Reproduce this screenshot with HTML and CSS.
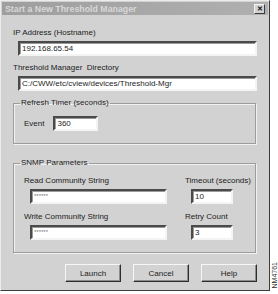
FILE: index.html
```html
<!DOCTYPE html>
<html lang="en">
<head>
    <meta charset="UTF-8">
    <title>Start a New Threshold Manager</title>
    <link rel="stylesheet" href="styles.css">
</head>
<body>
<div class="page">
    <div class="dialog">
        <div class="titlebar">
            <span class="title">Start a New Threshold Manager</span>
            <span class="close">&#x2715;</span>
        </div>
        <div class="content">
            <div class="field first">
                <div class="label">IP Address (Hostname)</div>
                <div class="input">192.168.65.54</div>
            </div>
            <div class="field">
                <div class="label">Threshold Manager&nbsp; Directory</div>
                <div class="input">C:/CWW/etc/cview/devices/Threshold-Mgr</div>
            </div>

            <fieldset class="group refresh">
                <legend>Refresh Timer (seconds)</legend>
                <div class="event-row">
                    <span class="label">Event</span>
                    <div class="input event">360</div>
                </div>
            </fieldset>

            <fieldset class="group snmp">
                <legend>SNMP Parameters</legend>
                <div class="snmp-grid">
                    <div class="cell">
                        <div class="label">Read Community String</div>
                        <div class="input secret">******</div>
                    </div>
                    <div class="cell">
                        <div class="label">Timeout (seconds)</div>
                        <div class="input num">10</div>
                    </div>
                    <div class="cell">
                        <div class="label">Write Community String</div>
                        <div class="input secret">******</div>
                    </div>
                    <div class="cell">
                        <div class="label">Retry Count</div>
                        <div class="input num">3</div>
                    </div>
                </div>
            </fieldset>

            <div class="buttons">
                <button>Launch</button>
                <button>Cancel</button>
                <button>Help</button>
            </div>
        </div>
    </div>
    <div class="side"><span>NM4761</span></div>
</div>
</body>
</html>
```

FILE: styles.css
```css
body {
    margin: 0;
    background-color: #fff;
    font-family: "Liberation Sans", Arial, sans-serif;
    font-size: 8px;
    color: #1c1c1c;
}
.page {
    display: flex;
    align-items: flex-start;
}
.dialog {
    width: 270px;
    height: 291px;
    box-sizing: border-box;
    background-color: #d2d2d2;
    border: 1px solid;
    border-color: #ececec #3c3c3c #3c3c3c #ececec;
    padding: 1px;
}
.titlebar {
    height: 13px;
    display: flex;
    justify-content: space-between;
    align-items: center;
    padding: 0 3px 0 3px;
    background: linear-gradient(to right, #9e9e9e, #b0b0b0);
}
.title {
    color: #d8d8d8;
    font-weight: bold;
    font-size: 8.8px;
}
.close {
    width: 9px;
    height: 8px;
    line-height: 8px;
    text-align: center;
    font-size: 7px;
    font-weight: bold;
    color: #111;
    background-color: #d2d2d2;
    border: 1px solid;
    border-color: #f4f4f4 #3c3c3c #3c3c3c #f4f4f4;
}
.content {
    padding: 0 11px 0 11px;
}
.label {
    line-height: 10px;
    white-space: nowrap;
}
.input {
    height: 11px;
    line-height: 11px;
    padding-left: 2px;
    background-color: #fff;
    border: 2px solid;
    border-color: #4a4a4a #f4f4f4 #f4f4f4 #4a4a4a;
    box-shadow: inset 1px 1px 0 #9a9a9a;
    white-space: nowrap;
    overflow: hidden;
}
.field {
    margin-top: 7px;
}
.field.first {
    margin-top: 13px;
}
.field .label {
    margin-bottom: 3px;
}
.field .input {
    margin-left: 5px;
}
.group {
    margin: 0 1px 0 0;
    padding: 0 6px 12px;
    border: 1px solid #9c9c9c;
    box-shadow: 1px 1px 0 #f2f2f2, inset 1px 1px 0 #f2f2f2;
}
.group legend {
    padding: 0 1px;
    line-height: 10px;
}
.refresh {
    margin-top: 7px;
}
.event-row {
    display: flex;
    align-items: center;
    gap: 9px;
    margin: 8px 0 0 4px;
}
.input.event {
    width: 39px;
}
.snmp {
    margin-top: 14px;
}
.snmp-grid {
    display: grid;
    grid-template-columns: 161px 50px;
    row-gap: 8px;
    margin: 8px 0 0 4px;
}
.cell .label {
    margin-bottom: 3px;
}
.cell .input {
    margin-left: 6px;
}
.input.secret {
    width: 131px;
    font-size: 6px;
    color: #777;
}
.input.num {
    width: 36px;
}
.buttons {
    display: flex;
    justify-content: flex-end;
    gap: 12px;
    margin-top: 11px;
}
button {
    width: 56px;
    height: 18px;
    padding: 0;
    font-family: "Liberation Sans", Arial, sans-serif;
    font-size: 8px;
    color: #1c1c1c;
    background-color: #d2d2d2;
    border: 1px solid;
    border-color: #f6f6f6 #2e2e2e #2e2e2e #f6f6f6;
    box-shadow: inset -1px -1px 0 #8c8c8c;
}
.side {
    width: 8px;
    height: 291px;
    display: flex;
    align-items: flex-end;
    justify-content: center;
}
.side span {
    writing-mode: vertical-rl;
    transform: rotate(180deg);
    font-size: 7px;
    color: #333;
    margin-bottom: 3px;
}
```
